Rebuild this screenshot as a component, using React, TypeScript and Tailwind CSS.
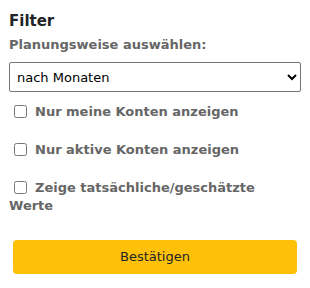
import React from "react";

export default function App() {
  const font = { fontFamily: '"DejaVu Sans", sans-serif' };
  return (
    <div className="w-[310px] h-[288px] bg-white" style={font}>
      <div className="pl-[9px] pr-[9px] pt-[11px]">
        <h2 className="text-[15px] font-bold text-[#212529] leading-[20px]">Filter</h2>
        <div className="mt-[5px] text-[13px] font-bold text-[#666666] leading-[18px]">Planungsweise auswählen:</div>
        <select className="mt-[8px] w-[292px] h-[30px] border border-[#767676] rounded-[2px] text-[13px] text-black pl-[3px] bg-white">
          <option>nach Monaten</option>
        </select>
        <div className="mt-[11px] flex flex-col gap-[20px] text-[13px] font-bold text-[#666666] leading-[18px]">
          <label className="block">
            <input type="checkbox" className="ml-[5px] mr-[8px] align-[-2px]" />
            Nur meine Konten anzeigen
          </label>
          <label className="block">
            <input type="checkbox" className="ml-[5px] mr-[8px] align-[-2px]" />
            Nur aktive Konten anzeigen
          </label>
          <label className="block">
            <input type="checkbox" className="ml-[5px] mr-[8px] align-[-2px]" />
            Zeige tatsächliche/geschätzte Werte
          </label>
        </div>
        <button className="mt-[25px] ml-[4px] w-[284px] h-[34px] rounded-[4px] bg-[#ffc107] text-[13px] text-[#212529]">
          Bestätigen
        </button>
      </div>
    </div>
  );
}
